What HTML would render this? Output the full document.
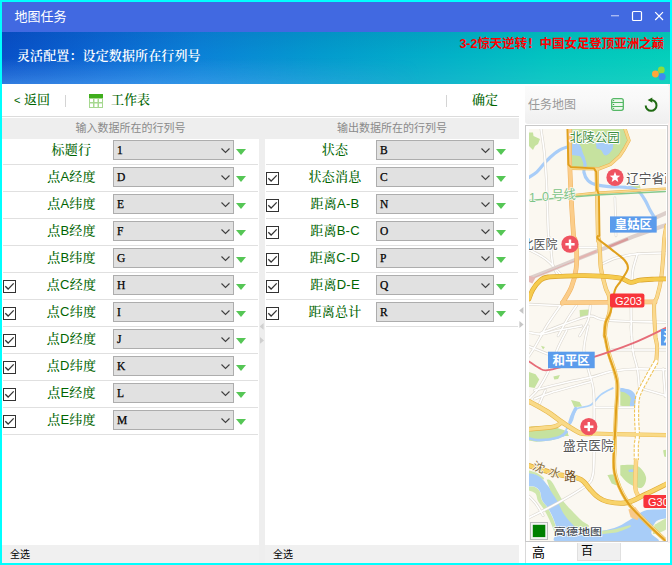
<!DOCTYPE html>
<html lang="zh-CN">
<head>
<meta charset="utf-8">
<title>地图任务</title>
<style>
*{box-sizing:border-box;margin:0;padding:0}
html,body{width:672px;height:565px;overflow:hidden;background:#00ffff}
body{position:relative;font-family:"Liberation Sans","Noto Sans CJK SC",sans-serif;font-size:12px;color:#000}
.abs{position:absolute}
#win{position:absolute;left:2px;top:2px;width:668px;height:561px;background:#fff;overflow:hidden}
#title{position:absolute;left:0;top:0;width:668px;height:30px;background:#4169e1;color:#fff}
#title .t{position:absolute;left:12.5px;top:7px;font-size:13px;line-height:16px;letter-spacing:0}
#banner{position:absolute;left:0;top:30px;width:668px;height:52px;
 background:linear-gradient(180deg,rgba(0,10,80,.07) 0%,rgba(0,0,0,0) 45%,rgba(255,255,255,.07) 100%),linear-gradient(90deg,#0850c8 0%,#0b68d3 15%,#0a82d7 30%,#039bce 48%,#02b0c8 66%,#02c4c0 82%,#04cfbb 100%);color:#fff;overflow:hidden}
#banner .t{font-family:"Liberation Sans","Noto Serif CJK SC",serif;font-weight:600;position:absolute;left:15px;top:15px;font-size:13px;line-height:18px;letter-spacing:0.12px}
#banner .news{position:absolute;right:6px;top:4px;font-size:12.45px;line-height:16px;color:#ff0000;font-weight:bold;white-space:nowrap}
#tool{position:absolute;left:0;top:82px;width:517px;height:33px;background:#fff;border-bottom:1px solid #dcdcdc;color:#006400;font-size:13px;font-family:"Liberation Sans","Noto Serif CJK SC",serif;font-weight:500}
#tool span{position:absolute;line-height:16px;white-space:nowrap}
.vsep{position:absolute;width:1px;height:12px;background:#d4d4d4;top:11px}
.panel{position:absolute;top:116px;background:#fff}
.phead{z-index:2;position:absolute;left:0;top:0;width:100%;height:21px;background:#eeeeee;color:#8a8a8a;font-size:11px;line-height:14px;text-align:center;padding-top:3px}
.row{position:absolute;left:0;width:100%;height:27px}
.row::after{content:"";position:absolute;left:1px;right:1px;bottom:0;height:1px;background:#e0e0e0}
.row .lb{position:absolute;top:4px;line-height:16px;font-size:13px;letter-spacing:0.25px;color:#006400;font-family:"Liberation Sans","Noto Serif CJK SC",serif;font-weight:500;white-space:nowrap;text-align:center}
.cb{position:absolute;top:2px;height:20px;width:121px;background:#e1e1e1;border:1px solid #adadad;font-family:"Liberation Serif","Noto Serif CJK SC",serif;font-size:11.5px;line-height:18px;padding-left:3px;-webkit-text-stroke:0.25px #000}
.cb svg{position:absolute;right:2px;top:7px}
.tri{position:absolute;top:11px;width:0;height:0;border-left:5px solid transparent;border-right:5px solid transparent;border-top:6px solid #55c655}
.chk{position:absolute;top:7px;width:13px;height:13px;border:1px solid #333;background:#fff}
.chk svg{position:absolute;left:0;top:0}
.pfoot{position:absolute;left:0;bottom:0;width:100%;height:18px;background:#f0f0f0;font-size:10px;line-height:12px;padding:4px 0 0 8px}
</style>
</head>
<body>
<div id="win">
 <div id="title"><span class="t">地图任务</span>
  <svg class="abs" style="left:600px;top:0" width="68" height="30" viewBox="0 0 68 30">
   <rect x="9" y="13" width="8" height="1.4" fill="#a9b8f2"/>
   <rect x="30.5" y="9.5" width="9" height="9" rx="1" fill="none" stroke="#fff" stroke-width="1.2"/>
   <path d="M53.2 10.2 L61 18 M61 10.2 L53.2 18" stroke="#fff" stroke-width="1.2" fill="none"/>
  </svg>
 </div>
 <div id="banner">
  <div class="abs" style="left:0;top:26px;width:420px;height:26px;background:linear-gradient(0deg,rgba(90,175,255,.38) 0%,rgba(90,175,255,.22) 35%,rgba(90,175,255,0) 100%);-webkit-mask-image:linear-gradient(90deg,#000 0%,#000 35%,transparent 100%);mask-image:linear-gradient(90deg,#000 0%,#000 35%,transparent 100%)"></div>
  <span class="t">灵活配置：设定数据所在行列号</span>
  <span class="news">3-2惊天逆转！中国女足登顶亚洲之巅</span>
  <svg class="abs" style="left:646px;top:32px" width="20" height="18" viewBox="0 0 20 18">
   <circle cx="13.3" cy="5.9" r="3.4" fill="#8edc3c"/>
   <circle cx="7.4" cy="10" r="3.4" fill="#ffa63a"/>
   <circle cx="14.2" cy="12.8" r="3.5" fill="#3f8af0"/>
  </svg>
 </div>
 <div id="tool">
  <span style="left:12px;top:8px;font-size:11px;font-family:'Liberation Sans',sans-serif">&lt;</span><span style="left:22px;top:8px">返回</span>
  <div class="vsep" style="left:63px"></div>
  <svg class="abs" style="left:87px;top:10px" width="14" height="14" viewBox="0 0 14 14">
   <rect x="0" y="0" width="14" height="14" fill="#a6d890"/>
   <rect x="0" y="0" width="14" height="4" fill="#3fae1c"/>
   <rect x="1" y="5" width="3" height="3" fill="#fff"/><rect x="5.5" y="5" width="3" height="3" fill="#fff"/><rect x="10" y="5" width="3" height="3" fill="#fff"/>
   <rect x="1" y="9.5" width="3" height="3.5" fill="#fff"/><rect x="5.5" y="9.5" width="3" height="3.5" fill="#fff"/><rect x="10" y="9.5" width="3" height="3.5" fill="#fff"/>
  </svg>
  <span style="left:109px;top:8px">工作表</span>
  <div class="vsep" style="left:444px"></div>
  <span style="left:470px;top:8px">确定</span>
 </div>

 <!-- left panel -->
 <div class="panel" id="pl" style="left:0;width:257px;height:445px">
  <div class="phead">输入数据所在的行列号</div>
  <div class="row" style="top:20px"><span class="lb" style="left:29px;width:81px">标题行</span><div class="cb" style="left:111px;width:121px">1<svg width="10" height="6" viewBox="0 0 10 6"><path d="M0.5 0.5 L4.5 4.5 L8.5 0.5" fill="none" stroke="#404040" stroke-width="1.1"/></svg></div><div class="tri" style="left:234px"></div></div>
  <div class="row" style="top:47px"><span class="lb" style="left:29px;width:81px">点A经度</span><div class="cb" style="left:111px;width:121px">D<svg width="10" height="6" viewBox="0 0 10 6"><path d="M0.5 0.5 L4.5 4.5 L8.5 0.5" fill="none" stroke="#404040" stroke-width="1.1"/></svg></div><div class="tri" style="left:234px"></div></div>
  <div class="row" style="top:74px"><span class="lb" style="left:29px;width:81px">点A纬度</span><div class="cb" style="left:111px;width:121px">E<svg width="10" height="6" viewBox="0 0 10 6"><path d="M0.5 0.5 L4.5 4.5 L8.5 0.5" fill="none" stroke="#404040" stroke-width="1.1"/></svg></div><div class="tri" style="left:234px"></div></div>
  <div class="row" style="top:101px"><span class="lb" style="left:29px;width:81px">点B经度</span><div class="cb" style="left:111px;width:121px">F<svg width="10" height="6" viewBox="0 0 10 6"><path d="M0.5 0.5 L4.5 4.5 L8.5 0.5" fill="none" stroke="#404040" stroke-width="1.1"/></svg></div><div class="tri" style="left:234px"></div></div>
  <div class="row" style="top:128px"><span class="lb" style="left:29px;width:81px">点B纬度</span><div class="cb" style="left:111px;width:121px">G<svg width="10" height="6" viewBox="0 0 10 6"><path d="M0.5 0.5 L4.5 4.5 L8.5 0.5" fill="none" stroke="#404040" stroke-width="1.1"/></svg></div><div class="tri" style="left:234px"></div></div>
  <div class="row" style="top:155px"><div class="chk" style="left:1px"><svg width="11" height="11" viewBox="0 0 11 11"><path d="M1.3 5.3 L4.1 8.1 L9.7 2.4" fill="none" stroke="#333" stroke-width="1.35"/></svg></div><span class="lb" style="left:29px;width:81px">点C经度</span><div class="cb" style="left:111px;width:121px">H<svg width="10" height="6" viewBox="0 0 10 6"><path d="M0.5 0.5 L4.5 4.5 L8.5 0.5" fill="none" stroke="#404040" stroke-width="1.1"/></svg></div><div class="tri" style="left:234px"></div></div>
  <div class="row" style="top:182px"><div class="chk" style="left:1px"><svg width="11" height="11" viewBox="0 0 11 11"><path d="M1.3 5.3 L4.1 8.1 L9.7 2.4" fill="none" stroke="#333" stroke-width="1.35"/></svg></div><span class="lb" style="left:29px;width:81px">点C纬度</span><div class="cb" style="left:111px;width:121px">I<svg width="10" height="6" viewBox="0 0 10 6"><path d="M0.5 0.5 L4.5 4.5 L8.5 0.5" fill="none" stroke="#404040" stroke-width="1.1"/></svg></div><div class="tri" style="left:234px"></div></div>
  <div class="row" style="top:209px"><div class="chk" style="left:1px"><svg width="11" height="11" viewBox="0 0 11 11"><path d="M1.3 5.3 L4.1 8.1 L9.7 2.4" fill="none" stroke="#333" stroke-width="1.35"/></svg></div><span class="lb" style="left:29px;width:81px">点D经度</span><div class="cb" style="left:111px;width:121px">J<svg width="10" height="6" viewBox="0 0 10 6"><path d="M0.5 0.5 L4.5 4.5 L8.5 0.5" fill="none" stroke="#404040" stroke-width="1.1"/></svg></div><div class="tri" style="left:234px"></div></div>
  <div class="row" style="top:236px"><div class="chk" style="left:1px"><svg width="11" height="11" viewBox="0 0 11 11"><path d="M1.3 5.3 L4.1 8.1 L9.7 2.4" fill="none" stroke="#333" stroke-width="1.35"/></svg></div><span class="lb" style="left:29px;width:81px">点D纬度</span><div class="cb" style="left:111px;width:121px">K<svg width="10" height="6" viewBox="0 0 10 6"><path d="M0.5 0.5 L4.5 4.5 L8.5 0.5" fill="none" stroke="#404040" stroke-width="1.1"/></svg></div><div class="tri" style="left:234px"></div></div>
  <div class="row" style="top:263px"><div class="chk" style="left:1px"><svg width="11" height="11" viewBox="0 0 11 11"><path d="M1.3 5.3 L4.1 8.1 L9.7 2.4" fill="none" stroke="#333" stroke-width="1.35"/></svg></div><span class="lb" style="left:29px;width:81px">点E经度</span><div class="cb" style="left:111px;width:121px">L<svg width="10" height="6" viewBox="0 0 10 6"><path d="M0.5 0.5 L4.5 4.5 L8.5 0.5" fill="none" stroke="#404040" stroke-width="1.1"/></svg></div><div class="tri" style="left:234px"></div></div>
  <div class="row" style="top:290px"><div class="chk" style="left:1px"><svg width="11" height="11" viewBox="0 0 11 11"><path d="M1.3 5.3 L4.1 8.1 L9.7 2.4" fill="none" stroke="#333" stroke-width="1.35"/></svg></div><span class="lb" style="left:29px;width:81px">点E纬度</span><div class="cb" style="left:111px;width:121px">M<svg width="10" height="6" viewBox="0 0 10 6"><path d="M0.5 0.5 L4.5 4.5 L8.5 0.5" fill="none" stroke="#404040" stroke-width="1.1"/></svg></div><div class="tri" style="left:234px"></div></div>
  <div class="pfoot">全选</div>
 </div>
 <!-- splitter -->
 <div class="abs" style="left:257px;top:116px;width:6px;height:445px;background:#eeeeee">
  <svg class="abs" style="left:0;top:204px" width="6" height="24" viewBox="0 0 6 24"><path d="M0.6 4.4 L4.6 1 V7.8 Z M5 18.4 L1 15 V21.8 Z" fill="#cfcfcf"/></svg>
 </div>
 <svg class="abs" style="left:516px;top:304px" width="7" height="24" viewBox="0 0 7 24"><path d="M1.2 4.5 L5.4 1 V8 Z M5.6 18.5 L1.4 15 V22 Z" fill="#c6c6c6"/></svg>
 <!-- right panel -->
 <div class="panel" id="pr" style="left:263px;width:254px;height:445px">
  <div class="phead">输出数据所在的行列号</div>
  <div class="row" style="top:20px"><span class="lb" style="left:30px;width:80px">状态</span><div class="cb" style="left:111px;width:118px">B<svg width="10" height="6" viewBox="0 0 10 6"><path d="M0.5 0.5 L4.5 4.5 L8.5 0.5" fill="none" stroke="#404040" stroke-width="1.1"/></svg></div><div class="tri" style="left:231px"></div></div>
  <div class="row" style="top:47px"><div class="chk" style="left:1px"><svg width="11" height="11" viewBox="0 0 11 11"><path d="M1.3 5.3 L4.1 8.1 L9.7 2.4" fill="none" stroke="#333" stroke-width="1.35"/></svg></div><span class="lb" style="left:30px;width:80px">状态消息</span><div class="cb" style="left:111px;width:118px">C<svg width="10" height="6" viewBox="0 0 10 6"><path d="M0.5 0.5 L4.5 4.5 L8.5 0.5" fill="none" stroke="#404040" stroke-width="1.1"/></svg></div><div class="tri" style="left:231px"></div></div>
  <div class="row" style="top:74px"><div class="chk" style="left:1px"><svg width="11" height="11" viewBox="0 0 11 11"><path d="M1.3 5.3 L4.1 8.1 L9.7 2.4" fill="none" stroke="#333" stroke-width="1.35"/></svg></div><span class="lb" style="left:30px;width:80px">距离A-B</span><div class="cb" style="left:111px;width:118px">N<svg width="10" height="6" viewBox="0 0 10 6"><path d="M0.5 0.5 L4.5 4.5 L8.5 0.5" fill="none" stroke="#404040" stroke-width="1.1"/></svg></div><div class="tri" style="left:231px"></div></div>
  <div class="row" style="top:101px"><div class="chk" style="left:1px"><svg width="11" height="11" viewBox="0 0 11 11"><path d="M1.3 5.3 L4.1 8.1 L9.7 2.4" fill="none" stroke="#333" stroke-width="1.35"/></svg></div><span class="lb" style="left:30px;width:80px">距离B-C</span><div class="cb" style="left:111px;width:118px">O<svg width="10" height="6" viewBox="0 0 10 6"><path d="M0.5 0.5 L4.5 4.5 L8.5 0.5" fill="none" stroke="#404040" stroke-width="1.1"/></svg></div><div class="tri" style="left:231px"></div></div>
  <div class="row" style="top:128px"><div class="chk" style="left:1px"><svg width="11" height="11" viewBox="0 0 11 11"><path d="M1.3 5.3 L4.1 8.1 L9.7 2.4" fill="none" stroke="#333" stroke-width="1.35"/></svg></div><span class="lb" style="left:30px;width:80px">距离C-D</span><div class="cb" style="left:111px;width:118px">P<svg width="10" height="6" viewBox="0 0 10 6"><path d="M0.5 0.5 L4.5 4.5 L8.5 0.5" fill="none" stroke="#404040" stroke-width="1.1"/></svg></div><div class="tri" style="left:231px"></div></div>
  <div class="row" style="top:155px"><div class="chk" style="left:1px"><svg width="11" height="11" viewBox="0 0 11 11"><path d="M1.3 5.3 L4.1 8.1 L9.7 2.4" fill="none" stroke="#333" stroke-width="1.35"/></svg></div><span class="lb" style="left:30px;width:80px">距离D-E</span><div class="cb" style="left:111px;width:118px">Q<svg width="10" height="6" viewBox="0 0 10 6"><path d="M0.5 0.5 L4.5 4.5 L8.5 0.5" fill="none" stroke="#404040" stroke-width="1.1"/></svg></div><div class="tri" style="left:231px"></div></div>
  <div class="row" style="top:182px"><div class="chk" style="left:1px"><svg width="11" height="11" viewBox="0 0 11 11"><path d="M1.3 5.3 L4.1 8.1 L9.7 2.4" fill="none" stroke="#333" stroke-width="1.35"/></svg></div><span class="lb" style="left:30px;width:80px">距离总计</span><div class="cb" style="left:111px;width:118px">R<svg width="10" height="6" viewBox="0 0 10 6"><path d="M0.5 0.5 L4.5 4.5 L8.5 0.5" fill="none" stroke="#404040" stroke-width="1.1"/></svg></div><div class="tri" style="left:231px"></div></div>
  <div class="pfoot">全选</div>
 </div>

 <!-- right: task map -->
 <div class="abs" style="left:666px;top:82px;width:2px;height:459px;background:#fdf0ef"></div>
 <div class="abs" id="mhead" style="left:523px;top:84px;width:144px;height:38px;background:linear-gradient(180deg,#fbfbfb 0%,#f8f8f8 40%,#efefef 100%);border-radius:0 0 3px 3px">
  <span class="abs" style="left:3px;top:10px;font-size:12px;line-height:18px;color:#999999;white-space:nowrap">任务地图</span>
  <svg class="abs" style="left:86px;top:12px" width="13" height="13" viewBox="0 0 13 13">
   <rect x="0.7" y="0.7" width="11.6" height="11.6" rx="2" fill="#eef8ee" stroke="#56b866" stroke-width="1.3"/>
   <path d="M0.8 4.55 H12.2 M0.8 8.5 H12.2" stroke="#56b866" stroke-width="1.1"/>
   <path d="M2 2.6 H3.2 M2 6.5 H3.2 M2 10.4 H3.2" stroke="#3f9e50" stroke-width="1"/>
  </svg>
  <svg class="abs" style="left:118px;top:11px" width="16" height="16" viewBox="0 0 16 16">
   <path d="M8.1 3 A5.4 5.4 0 1 1 2.7 8.4" fill="none" stroke="#1f6a12" stroke-width="2"/>
   <path d="M9.3 0.4 L9.3 5.8 L4.6 3.1 Z" fill="#1f6a12"/>
  </svg>
 </div>
 <div class="abs" id="mframe" style="left:523px;top:123px;width:143px;height:417px;border:1px solid #c9c9c9;background:#fff">
  <div class="abs" id="map" style="left:3px;top:3px;width:137px;height:412px;background:#fbf8f1;overflow:hidden">
  <!--MAP-->
<svg class="abs" style="left:0;top:0" width="138" height="412" viewBox="0 0 138 412">
<path d="M0.0 3.5 L4.0 3.5 L4.5 7.0 L11.0 10.0 L9.0 15.0 L6.0 17.0 L4.0 21.0 L0.0 17.0Z" fill="#c6e29f"/>
<path d="M41.5 -1.0 L95.9 -1.0 L100.0 11.5 L95.5 19.8 L90.7 27.1 L81.3 35.5 L69.8 39.6 L41.7 39.0Z" fill="#c6e29f"/>
<path d="M100.9 54.4 L110.6 55.3 L111.6 59.6 L102.0 58.7Z" fill="#c6e29f"/>
<path d="M50.6 181.0 L60.2 180.6 L59.6 189.1 L51.0 188.7Z" fill="#c6e29f"/>
<path d="M0.0 243.1 L6.6 245.2 L10.3 250.6 L5.6 259.1 L0.0 258.1Z" fill="#c6e29f"/>
<path d="M24.4 247.4 L30.9 245.9 L29.1 250.1 L25.3 250.6Z" fill="#c6e29f"/>
<path d="M12.0 216.7 L15.9 218.0 L14.1 220.6Z" fill="#c6e29f"/>
<path d="M42.0 270.9 L50.6 273.1 L53.1 277.4 L45.2 278.0Z" fill="#c6e29f"/>
<path d="M91.3 260.2 C93.4 260.9 101.7 261.6 104.1 264.5 C106.6 267.4 108.0 275.3 105.8 277.4 C103.7 279.4 93.7 276.8 91.3 276.7Z" fill="#c6e29f"/>
<path d="M0.0 297.7 L20.6 296.6 L37.7 302.0 L39.9 306.9 L0.0 306.9Z" fill="#c6e29f"/>
<path d="M0.0 303.0 C6.3 303.0 32.9 301.9 37.7 303.0 C42.6 304.1 33.8 307.8 29.1 309.4 C24.5 311.0 14.7 312.3 9.9 312.6 C5.0 313.0 1.6 311.7 0.0 311.6Z" fill="#c6e29f"/>
<path d="M0.0 341.5 C1.2 341.8 4.6 342.3 7.0 343.5 C9.4 344.7 13.4 347.3 14.5 348.5 C15.6 349.7 14.8 350.9 13.5 350.5 C12.2 350.1 9.2 347.1 7.0 346.2 C4.8 345.2 1.2 345.0 0.0 344.8Z" fill="#cfe7ad"/>
<path d="M0.0 357.5 C1.0 357.6 3.9 357.1 5.7 358.0 C7.5 358.9 9.6 360.4 10.8 362.6 C12.0 364.8 11.5 368.3 12.8 371.0 C14.1 373.7 16.9 375.8 18.8 379.0 C20.7 382.2 22.6 386.2 24.2 390.0 C25.8 393.8 27.0 398.3 28.3 402.0 C29.6 405.7 31.9 410.3 32.0 412.0 C32.1 413.7 30.2 413.7 29.0 412.0 C27.8 410.3 26.4 405.5 25.0 402.0 C23.6 398.5 22.2 394.6 20.5 391.0 C18.8 387.4 16.9 383.7 15.0 380.5 C13.1 377.3 10.4 374.7 9.0 372.0 C7.6 369.3 8.0 366.2 6.5 364.5 C5.0 362.8 1.1 362.0 0.0 361.5Z" fill="#cfe7ad"/>
<path d="M91.3 336.2 C94.1 336.3 104.1 334.9 108.4 336.9 C112.7 338.8 116.3 344.4 117.0 348.0 C117.7 351.6 115.6 357.6 112.7 358.7 C109.8 359.8 103.4 356.6 99.9 354.4 C96.3 352.3 92.7 347.3 91.3 345.9Z" fill="#c6e29f"/>
<path d="M78.4 345.9 C79.9 345.9 84.9 344.5 87.0 346.3 C89.1 348.1 92.0 355.2 91.3 356.6 C90.6 357.9 84.1 354.8 82.7 354.4Z" fill="#c6e29f"/>
<path d="M134.1 321.2 L140.6 320.1 L140.6 328.7 L135.2 327.6Z" fill="#c6e29f"/>
<path d="M42.9 15.2 C43.7 15.0 46.5 13.7 48.0 14.1 C49.5 14.5 50.9 16.1 51.9 17.6 C52.8 19.1 52.9 21.2 53.6 23.1 C54.2 25.1 56.0 28.1 55.9 29.1 C55.9 30.2 54.1 29.9 53.1 29.6 C52.2 29.2 51.9 27.6 50.1 27.0 C48.4 26.4 44.1 26.1 42.9 25.9Z" fill="#a8cdf8"/>
<path d="M66.6 13.3 C69.1 13.1 78.7 11.1 81.6 12.0 C84.5 12.9 84.3 16.3 84.0 18.4 C83.7 20.6 81.1 23.6 79.7 24.9 C78.3 26.1 76.7 26.8 75.4 26.1 C74.1 25.5 73.3 22.1 72.0 21.0 C70.7 19.9 68.4 19.9 67.7 19.7Z" fill="#a8cdf8"/>
<path d="M0.0 48.4 C1.3 47.5 5.2 45.4 7.7 43.1 C10.2 40.7 12.7 37.2 15.2 34.5 C17.7 31.8 20.0 29.3 22.7 27.0 C25.4 24.7 28.4 22.1 31.3 20.6 C34.1 19.0 38.4 18.1 39.9 17.6" fill="none" stroke="#a8cdf8" stroke-width="3.2" stroke-linejoin="round" stroke-linecap="round" />
<path d="M54.0 28.7 C54.4 29.9 56.0 33.2 56.1 35.6 C56.3 38.0 54.4 40.4 54.9 43.1 C55.4 45.7 57.0 49.5 59.1 51.6 C61.3 53.8 63.8 54.9 67.7 55.9 C71.6 57.0 77.7 57.5 82.7 57.9 C87.7 58.2 93.4 57.7 97.7 58.3 C102.0 58.9 105.4 59.2 108.4 61.3 C111.5 63.4 113.8 67.5 115.9 70.9 C118.1 74.3 119.6 78.6 121.3 81.6 C123.0 84.7 125.2 87.9 126.0 89.1" fill="none" stroke="#a8cdf8" stroke-width="3.2" stroke-linejoin="round" stroke-linecap="round" />
<path d="M83.8 259.1 C81.8 260.2 75.7 262.7 72.0 265.6 C68.2 268.4 65.4 273.9 61.3 276.3 C57.2 278.7 50.4 277.6 47.4 280.1 C44.3 282.6 44.7 288.0 43.1 291.3 C41.5 294.6 39.1 297.2 37.7 299.8 C36.3 302.5 35.0 305.7 34.5 306.9" fill="none" stroke="#aed3fb" stroke-width="1.8" stroke-linejoin="round" stroke-linecap="round" />
<path d="M91.3 258.7 C93.1 259.1 99.4 259.8 102.0 261.3 C104.6 262.8 106.2 265.1 106.7 267.7 C107.2 270.3 106.2 275.2 105.2 276.7 C104.2 278.2 101.5 278.0 100.9 276.7 C100.3 275.4 102.3 270.9 101.6 268.8 C100.8 266.6 98.4 264.9 96.6 263.9 C94.9 262.8 92.2 262.6 91.3 262.4Z" fill="#a8cdf8"/>
<path d="M37.7 303.0 C36.3 303.9 33.8 307.0 29.1 308.4 C24.5 309.7 14.7 311.0 9.9 311.1 C5.0 311.3 1.6 309.7 0.0 309.4" fill="none" stroke="#a8cdf8" stroke-width="2.6" stroke-linejoin="round" stroke-linecap="round" />
<path d="M46.7 279.5 C46.1 280.7 44.0 284.7 43.1 287.0 C42.1 289.3 41.3 292.4 40.9 293.4" fill="none" stroke="#a8cdf8" stroke-width="3.4" stroke-linejoin="round" stroke-linecap="round" />
<path d="M-2.0 344.0 C-0.5 344.3 4.4 344.6 7.0 345.7 C9.6 346.8 11.7 348.5 13.7 350.4 C15.7 352.3 17.3 354.9 19.1 357.1 C20.9 359.3 22.4 361.5 24.4 363.8 C26.4 366.1 29.5 368.5 31.1 371.0 C32.7 373.5 32.4 376.1 33.8 379.0 C35.1 381.9 36.5 385.5 39.2 388.4 C41.9 391.3 46.1 394.4 49.9 396.4 C53.7 398.4 57.9 399.6 61.9 400.5 C65.9 401.4 69.5 402.0 74.0 401.5 C78.5 401.0 84.0 399.6 89.0 397.5 C94.0 395.4 99.8 391.3 104.1 388.7 C108.4 386.1 110.9 383.2 114.8 381.9 C118.7 380.5 123.3 380.8 127.7 380.6 C132.1 380.4 138.8 379.3 141.0 380.6 C143.2 381.9 143.2 386.4 141.0 388.3 C138.8 390.2 130.8 389.5 127.7 392.1 C124.6 394.7 123.0 400.1 122.3 403.7 C121.6 407.3 138.8 412.3 123.8 414.0 C108.8 415.7 48.4 416.0 32.5 414.0 C16.6 412.0 29.9 405.9 28.5 401.8 C27.1 397.8 26.0 393.5 24.4 389.7 C22.8 385.9 20.9 382.1 19.0 379.0 C17.1 375.9 14.3 373.8 13.0 371.0 C11.7 368.2 12.2 364.7 11.0 362.5 C9.8 360.3 7.9 358.7 5.7 357.8 C3.5 356.9 -0.7 357.5 -2.0 357.4Z" fill="#a8cdf8"/>
<path d="M17.6 350.6 C18.5 351.0 20.2 349.5 22.8 352.8 C25.4 356.1 30.0 366.0 33.2 370.7 C36.4 375.4 39.0 377.6 42.2 381.1 C45.4 384.6 49.6 388.8 52.6 391.5 C55.6 394.2 60.4 395.8 60.0 397.2 C59.6 398.6 52.9 400.4 50.0 400.0 C47.1 399.6 45.4 397.2 42.8 394.6 C40.2 392.0 36.9 388.2 34.5 384.5 C32.1 380.8 30.8 376.5 28.6 372.6 C26.4 368.7 22.5 363.1 21.3 361.2Z" fill="#cde6aa"/>
<path d="M72.0 402.0 C74.5 401.6 82.4 400.8 87.0 399.9 C91.6 398.9 97.5 396.7 99.9 396.4 C102.2 396.1 102.9 397.1 101.1 398.1 C99.4 399.2 93.8 401.7 89.1 402.9 C84.5 404.0 75.9 404.6 73.3 405.0Z" fill="#cfe7ad"/>
<path d="M125.6 395.6 C128.1 394.4 138.1 388.0 140.6 388.3 C143.1 388.6 142.2 394.7 140.6 397.3 C139.0 399.9 133.7 402.4 130.9 403.7 C128.1 405.0 125.0 404.8 123.8 405.0Z" fill="#cfe7ad"/>
<path d="M99.4 340.7 C100.2 340.6 103.3 339.9 104.1 340.3 C105.0 340.6 105.3 342.4 104.6 342.9 C103.8 343.3 100.6 343.0 99.9 343.1Z" fill="#a8cdf8"/>
<path d="M12.0 0.0 C12.5 3.8 14.3 14.3 15.2 22.7 C16.1 31.1 16.6 36.5 17.4 50.6 C18.1 64.6 18.9 97.0 19.5 106.9 C20.1 116.8 20.3 105.1 21.0 109.9 C21.7 114.6 22.4 129.5 23.8 135.6 C25.1 141.6 28.2 144.5 29.1 146.3" fill="none" stroke="#dcd8d0" stroke-width="2.8" stroke-linejoin="round" stroke-linecap="round" />
<path d="M85.9 68.8 L87.0 106.9" fill="none" stroke="#dcd8d0" stroke-width="2.5999999999999996" stroke-linejoin="round" stroke-linecap="round" />
<path d="M0.0 120.6 C2.0 121.6 8.6 124.9 12.0 127.0 C15.4 129.1 17.0 130.0 20.6 133.4 C24.1 136.8 31.3 145.0 33.4 147.4" fill="none" stroke="#dcd8d0" stroke-width="2.8" stroke-linejoin="round" stroke-linecap="round" />
<path d="M49.5 118.4 L67.7 118.4" fill="none" stroke="#dcd8d0" stroke-width="2.8" stroke-linejoin="round" stroke-linecap="round" />
<path d="M72.0 135.6 C74.5 134.5 80.9 130.9 87.0 129.1 C93.1 127.4 99.5 125.7 108.4 124.9 C117.3 124.0 135.2 124.0 140.6 123.8" fill="none" stroke="#dcd8d0" stroke-width="2.8" stroke-linejoin="round" stroke-linecap="round" />
<path d="M108.4 124.9 C107.7 127.4 105.0 135.6 104.1 139.9 C103.2 144.1 103.2 148.8 103.1 150.6" fill="none" stroke="#dcd8d0" stroke-width="2.8" stroke-linejoin="round" stroke-linecap="round" />
<path d="M0.0 175.2 L31.3 176.7" fill="none" stroke="#dcd8d0" stroke-width="2.8" stroke-linejoin="round" stroke-linecap="round" />
<path d="M31.3 176.7 C29.1 179.9 21.6 190.5 18.4 195.6 C15.2 200.6 13.1 205.0 12.0 206.9" fill="none" stroke="#dcd8d0" stroke-width="2.8" stroke-linejoin="round" stroke-linecap="round" />
<path d="M47.4 176.7 C45.7 179.1 40.7 186.2 37.7 191.3 C34.7 196.3 30.6 204.3 29.1 206.9" fill="none" stroke="#dcd8d0" stroke-width="2.8" stroke-linejoin="round" stroke-linecap="round" />
<path d="M12.0 204.1 C16.6 202.3 31.6 196.3 39.9 193.4 C48.1 190.6 54.9 187.4 61.3 187.0 C67.7 186.6 65.2 190.2 78.4 191.3 C91.6 192.4 130.2 193.1 140.6 193.4" fill="none" stroke="#dcd8d0" stroke-width="2.8" stroke-linejoin="round" stroke-linecap="round" />
<path d="M61.3 176.7 C60.9 179.1 60.9 186.2 59.1 191.3 C57.4 196.3 52.0 204.3 50.6 206.9" fill="none" stroke="#dcd8d0" stroke-width="2.8" stroke-linejoin="round" stroke-linecap="round" />
<path d="M102.0 176.7 L102.4 206.9" fill="none" stroke="#dcd8d0" stroke-width="2.8" stroke-linejoin="round" stroke-linecap="round" />
<path d="M0.0 203.4 C2.2 203.7 8.2 205.5 13.1 205.1 C17.9 204.8 22.5 202.6 29.1 201.3 C35.7 199.9 48.8 197.7 52.7 197.0" fill="none" stroke="#dcd8d0" stroke-width="2.8" stroke-linejoin="round" stroke-linecap="round" />
<path d="M13.1 205.1 C11.8 207.4 7.7 214.8 5.6 218.4 C3.4 222.1 0.9 225.6 0.0 227.0" fill="none" stroke="#dcd8d0" stroke-width="2.8" stroke-linejoin="round" stroke-linecap="round" />
<path d="M0.0 217.4 L18.4 224.9" fill="none" stroke="#dcd8d0" stroke-width="2.8" stroke-linejoin="round" stroke-linecap="round" />
<path d="M37.7 201.3 C36.3 204.1 32.0 212.0 29.1 218.4 C26.3 224.9 23.8 233.1 20.6 239.9 C17.4 246.6 13.3 254.1 9.9 259.1 C6.4 264.1 1.6 268.1 0.0 269.9" fill="none" stroke="#dcd8d0" stroke-width="2.8" stroke-linejoin="round" stroke-linecap="round" />
<path d="M59.1 197.0 C58.4 200.9 54.9 213.4 54.9 220.6 C54.9 227.7 57.5 233.1 59.1 239.9 C60.7 246.6 63.5 252.7 64.5 261.3 C65.5 269.9 65.0 286.3 65.1 291.3" fill="none" stroke="#dcd8d0" stroke-width="2.8" stroke-linejoin="round" stroke-linecap="round" />
<path d="M82.7 221.0 L140.6 221.0" fill="none" stroke="#dcd8d0" stroke-width="2.8" stroke-linejoin="round" stroke-linecap="round" />
<path d="M102.0 197.0 C102.3 201.3 103.1 215.6 104.1 222.7 C105.2 229.9 107.3 233.4 108.4 239.9 C109.5 246.3 110.2 257.7 110.6 261.3" fill="none" stroke="#dcd8d0" stroke-width="2.8" stroke-linejoin="round" stroke-linecap="round" />
<path d="M5.6 261.3 C10.6 260.0 26.3 255.9 35.6 253.8 C44.9 251.6 53.4 250.3 61.3 248.4 C69.1 246.5 74.9 243.9 82.7 242.4 C90.6 241.0 98.8 240.1 108.4 239.9 C118.1 239.6 135.2 240.7 140.6 240.9" fill="none" stroke="#dcd8d0" stroke-width="2.8" stroke-linejoin="round" stroke-linecap="round" />
<path d="M5.6 269.9 C8.4 268.8 13.4 266.3 22.7 263.4 C32.0 260.6 54.9 254.5 61.3 252.7" fill="none" stroke="#dcd8d0" stroke-width="2.8" stroke-linejoin="round" stroke-linecap="round" />
<path d="M65.6 278.4 L108.4 278.4" fill="none" stroke="#dcd8d0" stroke-width="2.8" stroke-linejoin="round" stroke-linecap="round" />
<path d="M110.6 259.1 L140.6 267.7" fill="none" stroke="#dcd8d0" stroke-width="2.8" stroke-linejoin="round" stroke-linecap="round" />
<path d="M134.1 239.9 L136.3 267.7" fill="none" stroke="#dcd8d0" stroke-width="2.8" stroke-linejoin="round" stroke-linecap="round" />
<path d="M9.9 276.3 L16.3 261.3" fill="none" stroke="#dcd8d0" stroke-width="2.8" stroke-linejoin="round" stroke-linecap="round" />
<path d="M65.1 322.3 C64.9 326.2 65.2 340.1 63.9 345.9 C62.5 351.6 62.8 351.9 57.0 356.6 C51.2 361.2 38.6 368.4 29.1 373.7 C19.6 379.1 4.9 386.2 0.0 388.7" fill="none" stroke="#dcd8d0" stroke-width="3.0" stroke-linejoin="round" stroke-linecap="round" />
<path d="M0.0 367.3 C1.3 368.7 5.4 372.6 7.7 375.9 C10.1 379.1 13.1 384.8 14.1 386.6" fill="none" stroke="#dcd8d0" stroke-width="2.8" stroke-linejoin="round" stroke-linecap="round" />
<path d="M12.0 0.0 C12.5 3.8 14.3 14.3 15.2 22.7 C16.1 31.1 16.6 36.5 17.4 50.6 C18.1 64.6 18.9 97.0 19.5 106.9 C20.1 116.8 20.3 105.1 21.0 109.9 C21.7 114.6 22.4 129.5 23.8 135.6 C25.1 141.6 28.2 144.5 29.1 146.3" fill="none" stroke="#ffffff" stroke-width="1.6" stroke-linejoin="round" stroke-linecap="round" />
<path d="M85.9 68.8 L87.0 106.9" fill="none" stroke="#ffffff" stroke-width="1.4" stroke-linejoin="round" stroke-linecap="round" />
<path d="M0.0 120.6 C2.0 121.6 8.6 124.9 12.0 127.0 C15.4 129.1 17.0 130.0 20.6 133.4 C24.1 136.8 31.3 145.0 33.4 147.4" fill="none" stroke="#ffffff" stroke-width="1.6" stroke-linejoin="round" stroke-linecap="round" />
<path d="M49.5 118.4 L67.7 118.4" fill="none" stroke="#ffffff" stroke-width="1.6" stroke-linejoin="round" stroke-linecap="round" />
<path d="M72.0 135.6 C74.5 134.5 80.9 130.9 87.0 129.1 C93.1 127.4 99.5 125.7 108.4 124.9 C117.3 124.0 135.2 124.0 140.6 123.8" fill="none" stroke="#ffffff" stroke-width="1.6" stroke-linejoin="round" stroke-linecap="round" />
<path d="M108.4 124.9 C107.7 127.4 105.0 135.6 104.1 139.9 C103.2 144.1 103.2 148.8 103.1 150.6" fill="none" stroke="#ffffff" stroke-width="1.6" stroke-linejoin="round" stroke-linecap="round" />
<path d="M0.0 175.2 L31.3 176.7" fill="none" stroke="#ffffff" stroke-width="1.6" stroke-linejoin="round" stroke-linecap="round" />
<path d="M31.3 176.7 C29.1 179.9 21.6 190.5 18.4 195.6 C15.2 200.6 13.1 205.0 12.0 206.9" fill="none" stroke="#ffffff" stroke-width="1.6" stroke-linejoin="round" stroke-linecap="round" />
<path d="M47.4 176.7 C45.7 179.1 40.7 186.2 37.7 191.3 C34.7 196.3 30.6 204.3 29.1 206.9" fill="none" stroke="#ffffff" stroke-width="1.6" stroke-linejoin="round" stroke-linecap="round" />
<path d="M12.0 204.1 C16.6 202.3 31.6 196.3 39.9 193.4 C48.1 190.6 54.9 187.4 61.3 187.0 C67.7 186.6 65.2 190.2 78.4 191.3 C91.6 192.4 130.2 193.1 140.6 193.4" fill="none" stroke="#ffffff" stroke-width="1.6" stroke-linejoin="round" stroke-linecap="round" />
<path d="M61.3 176.7 C60.9 179.1 60.9 186.2 59.1 191.3 C57.4 196.3 52.0 204.3 50.6 206.9" fill="none" stroke="#ffffff" stroke-width="1.6" stroke-linejoin="round" stroke-linecap="round" />
<path d="M102.0 176.7 L102.4 206.9" fill="none" stroke="#ffffff" stroke-width="1.6" stroke-linejoin="round" stroke-linecap="round" />
<path d="M0.0 203.4 C2.2 203.7 8.2 205.5 13.1 205.1 C17.9 204.8 22.5 202.6 29.1 201.3 C35.7 199.9 48.8 197.7 52.7 197.0" fill="none" stroke="#ffffff" stroke-width="1.6" stroke-linejoin="round" stroke-linecap="round" />
<path d="M13.1 205.1 C11.8 207.4 7.7 214.8 5.6 218.4 C3.4 222.1 0.9 225.6 0.0 227.0" fill="none" stroke="#ffffff" stroke-width="1.6" stroke-linejoin="round" stroke-linecap="round" />
<path d="M0.0 217.4 L18.4 224.9" fill="none" stroke="#ffffff" stroke-width="1.6" stroke-linejoin="round" stroke-linecap="round" />
<path d="M37.7 201.3 C36.3 204.1 32.0 212.0 29.1 218.4 C26.3 224.9 23.8 233.1 20.6 239.9 C17.4 246.6 13.3 254.1 9.9 259.1 C6.4 264.1 1.6 268.1 0.0 269.9" fill="none" stroke="#ffffff" stroke-width="1.6" stroke-linejoin="round" stroke-linecap="round" />
<path d="M59.1 197.0 C58.4 200.9 54.9 213.4 54.9 220.6 C54.9 227.7 57.5 233.1 59.1 239.9 C60.7 246.6 63.5 252.7 64.5 261.3 C65.5 269.9 65.0 286.3 65.1 291.3" fill="none" stroke="#ffffff" stroke-width="1.6" stroke-linejoin="round" stroke-linecap="round" />
<path d="M82.7 221.0 L140.6 221.0" fill="none" stroke="#ffffff" stroke-width="1.6" stroke-linejoin="round" stroke-linecap="round" />
<path d="M102.0 197.0 C102.3 201.3 103.1 215.6 104.1 222.7 C105.2 229.9 107.3 233.4 108.4 239.9 C109.5 246.3 110.2 257.7 110.6 261.3" fill="none" stroke="#ffffff" stroke-width="1.6" stroke-linejoin="round" stroke-linecap="round" />
<path d="M5.6 261.3 C10.6 260.0 26.3 255.9 35.6 253.8 C44.9 251.6 53.4 250.3 61.3 248.4 C69.1 246.5 74.9 243.9 82.7 242.4 C90.6 241.0 98.8 240.1 108.4 239.9 C118.1 239.6 135.2 240.7 140.6 240.9" fill="none" stroke="#ffffff" stroke-width="1.6" stroke-linejoin="round" stroke-linecap="round" />
<path d="M5.6 269.9 C8.4 268.8 13.4 266.3 22.7 263.4 C32.0 260.6 54.9 254.5 61.3 252.7" fill="none" stroke="#ffffff" stroke-width="1.6" stroke-linejoin="round" stroke-linecap="round" />
<path d="M65.6 278.4 L108.4 278.4" fill="none" stroke="#ffffff" stroke-width="1.6" stroke-linejoin="round" stroke-linecap="round" />
<path d="M110.6 259.1 L140.6 267.7" fill="none" stroke="#ffffff" stroke-width="1.6" stroke-linejoin="round" stroke-linecap="round" />
<path d="M134.1 239.9 L136.3 267.7" fill="none" stroke="#ffffff" stroke-width="1.6" stroke-linejoin="round" stroke-linecap="round" />
<path d="M9.9 276.3 L16.3 261.3" fill="none" stroke="#ffffff" stroke-width="1.6" stroke-linejoin="round" stroke-linecap="round" />
<path d="M65.1 322.3 C64.9 326.2 65.2 340.1 63.9 345.9 C62.5 351.6 62.8 351.9 57.0 356.6 C51.2 361.2 38.6 368.4 29.1 373.7 C19.6 379.1 4.9 386.2 0.0 388.7" fill="none" stroke="#ffffff" stroke-width="1.8" stroke-linejoin="round" stroke-linecap="round" />
<path d="M0.0 367.3 C1.3 368.7 5.4 372.6 7.7 375.9 C10.1 379.1 13.1 384.8 14.1 386.6" fill="none" stroke="#ffffff" stroke-width="1.6" stroke-linejoin="round" stroke-linecap="round" />
<path d="M125.6 89.1 L140.6 82.3" fill="none" stroke="#dccfcb" stroke-width="4" stroke-linejoin="round" stroke-linecap="round" />
<path d="M0.0 149.5 L16.3 143.1 L50.6 129.1 L82.7 116.3 L104.1 107.7 L134.1 97.0 L140.6 94.4" fill="none" stroke="#dccfcb" stroke-width="4" stroke-linejoin="round" stroke-linecap="round" />
<path d="M46.9 130.6 L67.7 122.2" fill="none" stroke="#e3b4b0" stroke-width="2.4" stroke-linejoin="round" stroke-linecap="butt" />
<path d="M80.2 117.6 L99.0 109.9" fill="none" stroke="#d99a9a" stroke-width="2.6" stroke-linejoin="round" stroke-linecap="butt" />
<path d="M0.0 150.6 L48.4 130.9" fill="none" stroke="#e0b0b0" stroke-width="1" stroke-linejoin="round" stroke-linecap="round" />
<path d="M0.0 146.7 L6.6 148.4 L3.4 154.4 L0.0 153.1Z" fill="#e6b8b4"/>
<path d="M40.5 0.0 C40.6 6.6 40.2 22.0 40.9 39.9 C41.6 57.7 43.7 95.3 44.6 106.9 C45.4 118.6 45.4 107.2 45.9 109.9 C46.4 112.5 47.4 117.7 47.6 122.7 C47.8 127.7 48.0 134.0 47.1 139.9 C46.3 145.7 44.7 152.4 42.4 158.1 C40.1 163.8 34.9 171.5 33.4 174.1" fill="none" stroke="#f0b25f" stroke-width="4.7" stroke-linejoin="round" stroke-linecap="round" />
<path d="M33.4 173.7 L80.6 173.3 L126.2 172.9" fill="none" stroke="#f0b25f" stroke-width="4.6" stroke-linejoin="round" stroke-linecap="round" />
<path d="M95.7 -1.0 L100.0 11.5 L95.5 19.8 L90.7 27.1 L81.3 35.5 L69.8 39.8 L42.0 39.3" fill="none" stroke="#e8b450" stroke-width="3.4" stroke-linejoin="round" stroke-linecap="round" />
<path d="M46.7 66.0 L67.7 63.9 L136.3 59.8" fill="none" stroke="#e8b450" stroke-width="2.6" stroke-linejoin="round" stroke-linecap="round" />
<path d="M67.7 40.9 C67.9 51.9 68.6 95.4 69.0 106.9 C69.4 118.4 69.5 107.2 69.9 109.9 C70.2 112.5 70.6 117.7 70.9 122.7 C71.3 127.7 71.0 133.8 72.0 139.9 C73.0 145.9 75.4 154.5 76.7 159.1 C78.1 163.8 79.5 163.8 80.1 167.7 C80.8 171.6 81.1 178.1 80.6 182.7 C80.0 187.4 77.5 191.5 76.7 195.6 C75.9 199.6 76.0 205.0 75.9 206.9" fill="none" stroke="#e8b450" stroke-width="4.2" stroke-linejoin="round" stroke-linecap="round" />
<path d="M75.9 206.9 C76.0 207.4 76.0 206.9 76.7 209.9 C77.4 212.8 78.2 217.7 80.1 224.9 C82.0 232.0 86.9 243.1 88.1 252.7 C89.2 262.4 87.4 273.7 87.0 282.7 C86.6 291.7 86.1 301.4 85.9 306.9 C85.7 312.4 85.9 309.7 85.9 315.9 C85.9 322.0 84.0 334.4 85.9 343.7 C87.9 353.0 92.5 363.4 97.7 371.6 C102.9 379.8 110.6 386.4 117.0 393.0 C123.4 399.6 133.1 408.2 136.3 411.2" fill="none" stroke="#efc050" stroke-width="4.0" stroke-linejoin="round" stroke-linecap="round" />
<path d="M137.3 97.0 C137.0 99.1 135.7 104.5 135.2 109.9 C134.7 115.2 134.7 122.4 134.1 129.1 C133.6 135.9 133.0 144.1 132.0 150.6 C131.0 157.0 129.3 163.4 128.1 167.7 C127.0 172.1 125.4 170.2 125.1 176.7 C124.8 183.2 126.1 201.4 126.4 206.9 C126.7 212.4 126.6 207.9 126.8 209.9 C127.1 211.8 128.1 214.7 128.1 218.4 C128.2 222.2 127.4 230.0 127.3 232.4" fill="none" stroke="#e8b450" stroke-width="4.0" stroke-linejoin="round" stroke-linecap="round" />
<path d="M127.3 232.4 C125.6 235.4 120.1 244.7 117.0 250.6 C113.9 256.5 110.4 261.6 108.8 267.7 C107.3 273.8 107.6 280.5 107.6 287.0 C107.5 293.5 108.5 302.1 108.4 306.9 C108.4 311.7 107.5 311.9 107.3 315.9 C107.2 319.8 107.3 328.4 107.3 330.9" fill="none" stroke="#efc458" stroke-width="5.2" stroke-linejoin="round" stroke-linecap="butt" stroke-dasharray="3 1.4"/>
<path d="M107.1 330.9 C107.0 335.5 105.9 352.6 106.3 358.7 C106.7 364.8 109.0 365.9 109.5 367.3" fill="none" stroke="#f0c060" stroke-width="4.4" stroke-linejoin="round" stroke-linecap="round" />
<path d="M50.6 304.1 C56.6 304.3 72.0 304.9 87.0 305.2 C102.0 305.5 131.6 305.9 140.6 306.1" fill="none" stroke="#ecbc55" stroke-width="4.2" stroke-linejoin="round" stroke-linecap="round" />
<path d="M40.5 0.0 C40.6 6.6 40.2 22.0 40.9 39.9 C41.6 57.7 43.7 95.3 44.6 106.9 C45.4 118.6 45.4 107.2 45.9 109.9 C46.4 112.5 47.4 117.7 47.6 122.7 C47.8 127.7 48.0 134.0 47.1 139.9 C46.3 145.7 44.7 152.4 42.4 158.1 C40.1 163.8 34.9 171.5 33.4 174.1" fill="none" stroke="#fbcd8a" stroke-width="3.7" stroke-linejoin="round" stroke-linecap="round" />
<path d="M33.4 173.7 L80.6 173.3 L126.2 172.9" fill="none" stroke="#fbcd8a" stroke-width="3.6" stroke-linejoin="round" stroke-linecap="round" />
<path d="M95.7 -1.0 L100.0 11.5 L95.5 19.8 L90.7 27.1 L81.3 35.5 L69.8 39.8 L42.0 39.3" fill="none" stroke="#f9d88c" stroke-width="2.4" stroke-linejoin="round" stroke-linecap="round" />
<path d="M46.7 66.0 L67.7 63.9 L136.3 59.8" fill="none" stroke="#f9d88c" stroke-width="1.6" stroke-linejoin="round" stroke-linecap="round" />
<path d="M67.7 40.9 C67.9 51.9 68.6 95.4 69.0 106.9 C69.4 118.4 69.5 107.2 69.9 109.9 C70.2 112.5 70.6 117.7 70.9 122.7 C71.3 127.7 71.0 133.8 72.0 139.9 C73.0 145.9 75.4 154.5 76.7 159.1 C78.1 163.8 79.5 163.8 80.1 167.7 C80.8 171.6 81.1 178.1 80.6 182.7 C80.0 187.4 77.5 191.5 76.7 195.6 C75.9 199.6 76.0 205.0 75.9 206.9" fill="none" stroke="#fad98e" stroke-width="3.2" stroke-linejoin="round" stroke-linecap="round" />
<path d="M75.9 206.9 C76.0 207.4 76.0 206.9 76.7 209.9 C77.4 212.8 78.2 217.7 80.1 224.9 C82.0 232.0 86.9 243.1 88.1 252.7 C89.2 262.4 87.4 273.7 87.0 282.7 C86.6 291.7 86.1 301.4 85.9 306.9 C85.7 312.4 85.9 309.7 85.9 315.9 C85.9 322.0 84.0 334.4 85.9 343.7 C87.9 353.0 92.5 363.4 97.7 371.6 C102.9 379.8 110.6 386.4 117.0 393.0 C123.4 399.6 133.1 408.2 136.3 411.2" fill="none" stroke="#fbe6b0" stroke-width="3.0" stroke-linejoin="round" stroke-linecap="round" />
<path d="M137.3 97.0 C137.0 99.1 135.7 104.5 135.2 109.9 C134.7 115.2 134.7 122.4 134.1 129.1 C133.6 135.9 133.0 144.1 132.0 150.6 C131.0 157.0 129.3 163.4 128.1 167.7 C127.0 172.1 125.4 170.2 125.1 176.7 C124.8 183.2 126.1 201.4 126.4 206.9 C126.7 212.4 126.6 207.9 126.8 209.9 C127.1 211.8 128.1 214.7 128.1 218.4 C128.2 222.2 127.4 230.0 127.3 232.4" fill="none" stroke="#fad98e" stroke-width="3.0" stroke-linejoin="round" stroke-linecap="round" />
<path d="M127.3 232.4 C125.6 235.4 120.1 244.7 117.0 250.6 C113.9 256.5 110.4 261.6 108.8 267.7 C107.3 273.8 107.6 280.5 107.6 287.0 C107.5 293.5 108.5 302.1 108.4 306.9 C108.4 311.7 107.5 311.9 107.3 315.9 C107.2 319.8 107.3 328.4 107.3 330.9" fill="none" stroke="#ffffff" stroke-width="3.0" stroke-linejoin="round" stroke-linecap="round" />
<path d="M107.1 330.9 C107.0 335.5 105.9 352.6 106.3 358.7 C106.7 364.8 109.0 365.9 109.5 367.3" fill="none" stroke="#fbd88a" stroke-width="3.4" stroke-linejoin="round" stroke-linecap="round" />
<path d="M50.6 304.1 C56.6 304.3 72.0 304.9 87.0 305.2 C102.0 305.5 131.6 305.9 140.6 306.1" fill="none" stroke="#f9da86" stroke-width="3.2" stroke-linejoin="round" stroke-linecap="round" />
<path d="M0.0 169.9 C0.6 168.3 2.1 163.4 3.9 160.4 C5.6 157.5 7.7 154.4 10.3 152.3 C12.9 150.2 12.6 148.9 19.3 148.0 C26.0 147.1 41.8 146.9 50.6 146.7 C59.4 146.6 65.2 146.7 72.0 147.1 C78.8 147.5 86.4 148.0 91.3 149.1 C96.2 150.1 98.4 153.0 101.6 153.4 C104.8 153.7 106.6 151.7 110.6 151.2 C114.6 150.7 120.6 150.4 125.6 150.1 C130.6 149.9 138.1 150.0 140.6 149.9" fill="none" stroke="#d9a22a" stroke-width="4.8" stroke-linejoin="round" stroke-linecap="round" />
<path d="M0.0 272.4 C3.1 274.1 12.9 279.2 18.4 282.7 C24.0 286.2 28.1 289.9 33.4 293.4 C38.8 296.9 45.9 301.8 50.6 303.7 C55.2 305.6 59.5 304.6 61.3 304.8" fill="none" stroke="#e6b64a" stroke-width="5.0" stroke-linejoin="round" stroke-linecap="round" />
<path d="M0.0 300.3 C4.1 299.8 19.5 298.8 24.9 297.7 C30.2 296.6 31.1 294.1 32.4 293.4" fill="none" stroke="#e6b64a" stroke-width="4.6" stroke-linejoin="round" stroke-linecap="round" />
<path d="M-1.0 336.2 C0.7 336.8 4.0 338.1 9.0 339.6 C14.0 341.1 22.4 343.8 29.0 345.4 C35.6 347.0 44.1 347.8 48.5 349.1 C52.9 350.4 53.2 351.3 55.2 353.1 C57.2 354.9 58.4 357.4 60.6 359.8 C62.8 362.2 65.6 365.7 68.6 367.8 C71.6 369.9 73.6 371.6 78.4 372.6 C83.2 373.6 91.3 374.9 97.7 373.7 C104.1 372.4 109.8 368.5 117.0 365.1 C124.2 361.7 136.7 355.3 140.6 353.4" fill="none" stroke="#dfa934" stroke-width="5.0" stroke-linejoin="round" stroke-linecap="round" />
<path d="M0.0 169.9 C0.6 168.3 2.1 163.4 3.9 160.4 C5.6 157.5 7.7 154.4 10.3 152.3 C12.9 150.2 12.6 148.9 19.3 148.0 C26.0 147.1 41.8 146.9 50.6 146.7 C59.4 146.6 65.2 146.7 72.0 147.1 C78.8 147.5 86.4 148.0 91.3 149.1 C96.2 150.1 98.4 153.0 101.6 153.4 C104.8 153.7 106.6 151.7 110.6 151.2 C114.6 150.7 120.6 150.4 125.6 150.1 C130.6 149.9 138.1 150.0 140.6 149.9" fill="none" stroke="#f6cb4e" stroke-width="3.6" stroke-linejoin="round" stroke-linecap="round" />
<path d="M0.0 272.4 C3.1 274.1 12.9 279.2 18.4 282.7 C24.0 286.2 28.1 289.9 33.4 293.4 C38.8 296.9 45.9 301.8 50.6 303.7 C55.2 305.6 59.5 304.6 61.3 304.8" fill="none" stroke="#f9da88" stroke-width="3.8" stroke-linejoin="round" stroke-linecap="round" />
<path d="M0.0 300.3 C4.1 299.8 19.5 298.8 24.9 297.7 C30.2 296.6 31.1 294.1 32.4 293.4" fill="none" stroke="#f9da88" stroke-width="3.4" stroke-linejoin="round" stroke-linecap="round" />
<path d="M-1.0 336.2 C0.7 336.8 4.0 338.1 9.0 339.6 C14.0 341.1 22.4 343.8 29.0 345.4 C35.6 347.0 44.1 347.8 48.5 349.1 C52.9 350.4 53.2 351.3 55.2 353.1 C57.2 354.9 58.4 357.4 60.6 359.8 C62.8 362.2 65.6 365.7 68.6 367.8 C71.6 369.9 73.6 371.6 78.4 372.6 C83.2 373.6 91.3 374.9 97.7 373.7 C104.1 372.4 109.8 368.5 117.0 365.1 C124.2 361.7 136.7 355.3 140.6 353.4" fill="none" stroke="#f8d36a" stroke-width="3.8" stroke-linejoin="round" stroke-linecap="round" />
<path d="M99.4 380.6 L106.3 378.0 L111.6 384.9 L108.4 391.3 L101.6 388.3Z" fill="#f8c98a"/>
<path d="M38.4 0.0 L39.4 35.6 L42.0 38.1 L65.1 39.4 L67.3 43.1 L67.7 60.2 L69.9 65.6 L70.5 106.9" fill="none" stroke="#e0a01c" stroke-width="1.9" stroke-linejoin="round" stroke-linecap="round" />
<path d="M69.0 107.1 C69.1 107.6 67.1 108.0 69.4 110.3 C71.7 112.5 78.4 117.1 82.7 120.6 C87.1 124.1 92.9 128.1 95.6 131.3 C98.2 134.5 99.5 136.3 98.8 139.9 C98.1 143.4 93.4 149.1 91.3 152.7 C89.1 156.3 87.5 156.3 85.9 161.3 C84.3 166.3 83.2 177.4 81.6 182.7 C80.1 188.1 77.7 189.4 76.7 193.4 C75.7 197.5 75.6 204.6 75.4 206.9 C75.3 209.2 75.2 204.1 75.9 207.1 C76.5 210.1 77.5 217.2 79.5 224.9 C81.5 232.5 86.8 243.1 88.1 252.7 C89.3 262.4 87.4 273.7 87.0 282.7 C86.6 291.7 86.2 301.9 85.9 306.9 C85.7 312.0 85.6 306.9 85.5 313.1 C85.4 319.2 83.5 334.0 85.5 343.7 C87.5 353.5 92.1 363.4 97.3 371.6 C102.5 379.8 110.1 386.4 116.6 393.0 C123.0 399.6 132.6 408.2 135.8 411.2" fill="none" stroke="#e0a01c" stroke-width="2.1" stroke-linejoin="round" stroke-linecap="round" />
<path d="M0.0 71.6 L46.3 67.7 L67.7 66.0 L136.3 62.4" fill="none" stroke="#86c98e" stroke-width="1.5" stroke-linejoin="round" stroke-linecap="round" />
<path d="M0.0 232.4 C1.6 233.4 6.4 237.4 9.9 238.8 C13.3 240.2 12.0 242.5 20.6 240.9 C29.1 239.3 47.4 233.6 61.3 229.1 C75.2 224.7 91.6 219.1 104.1 214.1 C116.6 209.1 130.2 202.0 136.3 199.1 C142.3 196.3 139.8 197.4 140.6 197.0" fill="none" stroke="#e66c78" stroke-width="1.8" stroke-linejoin="round" stroke-linecap="round" />
<text x="40.8" y="13.2" font-size="12.5" font-family="Liberation Sans, Noto Sans CJK SC, sans-serif" fill="#3f8f3f" stroke="#ffffff" stroke-width="2" paint-order="stroke" stroke-linejoin="round" >北陵公园</text>
<circle cx="86" cy="48.4" r="8.6" fill="#ef5360"/>
<path d="M86.0 42.8 L87.4 46.5 L91.3 46.7 L88.3 49.1 L89.3 52.9 L86.0 50.8 L82.7 52.9 L83.7 49.1 L80.7 46.7 L84.6 46.5Z" fill="#fff"/>
<text x="97.2" y="53.6" font-size="12.7" font-family="Liberation Sans, Noto Sans CJK SC, sans-serif" fill="#555555" stroke="#ffffff" stroke-width="2" paint-order="stroke" stroke-linejoin="round" >辽宁省政府</text>
<text x="0" y="72.8" font-size="12.3" font-family="Liberation Sans, Noto Sans CJK SC, sans-serif" fill="#7cc488" stroke="#fbf8f1" stroke-width="1.5" paint-order="stroke" stroke-linejoin="round" >1</text>
<text x="13" y="71.89" font-size="12.3" font-family="Liberation Sans, Noto Sans CJK SC, sans-serif" fill="#7cc488" stroke="#fbf8f1" stroke-width="1.5" paint-order="stroke" stroke-linejoin="round" >0</text>
<text x="22.5" y="71.225" font-size="12.3" font-family="Liberation Sans, Noto Sans CJK SC, sans-serif" fill="#7cc488" stroke="#fbf8f1" stroke-width="1.5" paint-order="stroke" stroke-linejoin="round" >号</text>
<text x="34.5" y="70.38499999999999" font-size="12.3" font-family="Liberation Sans, Noto Sans CJK SC, sans-serif" fill="#7cc488" stroke="#fbf8f1" stroke-width="1.5" paint-order="stroke" stroke-linejoin="round" >线</text>
<rect x="81" y="87.4" width="46.7" height="16.2" fill="#5b9cec"/>
<text x="85.8" y="100" font-size="12.4" font-weight="bold" font-family="Liberation Sans, Noto Sans CJK SC, sans-serif" fill="#fff">皇姑区</text>
<circle cx="41" cy="115.2" r="8.6" fill="#ef5360"/>
<path d="M36.4 115.2 H45.6 M41 110.60000000000001 V119.8" stroke="#fff" stroke-width="2.4"/>
<text x="-7.5" y="119.5" font-size="12" font-family="Liberation Sans, Noto Sans CJK SC, sans-serif" fill="#555555" stroke="#ffffff" stroke-width="2" paint-order="stroke" stroke-linejoin="round" >北医院</text>
<rect x="81" y="164.5" width="34.4" height="14" rx="2" fill="#f8343a"/>
<text x="86" y="175.6" font-size="11" font-family="Liberation Sans, Noto Sans CJK SC, sans-serif" fill="#fff">G203</text>
<rect x="19" y="222.7" width="46.7" height="16.5" fill="#5b9cec"/>
<text x="23.6" y="235.5" font-size="12.4" font-weight="bold" font-family="Liberation Sans, Noto Sans CJK SC, sans-serif" fill="#fff">和平区</text>
<rect x="132" y="200" width="10" height="16.5" fill="#5b9cec"/>
<text x="134" y="212.8" font-size="12.4" font-weight="bold" font-family="Liberation Sans, Noto Sans CJK SC, sans-serif" fill="#fff">沈</text>
<circle cx="59.8" cy="297.7" r="8.6" fill="#ef5360"/>
<path d="M55.199999999999996 297.7 H64.39999999999999 M59.8 293.09999999999997 V302.3" stroke="#fff" stroke-width="2.4"/>
<text x="34" y="320.6" font-size="12.7" font-family="Liberation Sans, Noto Sans CJK SC, sans-serif" fill="#555555" stroke="#ffffff" stroke-width="2" paint-order="stroke" stroke-linejoin="round" >盛京医院</text>
<text x="4" y="342.5" font-size="12" font-family="Liberation Sans, Noto Sans CJK SC, sans-serif" fill="#8a7040" stroke="#fbf8f1" stroke-width="1.5" paint-order="stroke" stroke-linejoin="round" transform="rotate(20 10 337.5)">沈</text>
<text x="19.8" y="348" font-size="12" font-family="Liberation Sans, Noto Sans CJK SC, sans-serif" fill="#8a7040" stroke="#fbf8f1" stroke-width="1.5" paint-order="stroke" stroke-linejoin="round" transform="rotate(20 25.8 343)">水</text>
<text x="35.2" y="351.6" font-size="12" font-family="Liberation Sans, Noto Sans CJK SC, sans-serif" fill="#6b4a16" stroke="#fbf8f1" stroke-width="1.5" paint-order="stroke" stroke-linejoin="round" transform="rotate(0 41.2 346.6)">路</text>
<rect x="114.4" y="366" width="30" height="13" rx="2" fill="#f8343a"/>
<text x="119" y="376.8" font-size="11" font-family="Liberation Sans, Noto Sans CJK SC, sans-serif" fill="#fff">G304</text>
<rect x="1.5" y="393.5" width="17" height="17" fill="#f4f4f4" stroke="#bdbdbd" stroke-width="1"/>
<rect x="3.8" y="395.8" width="12.5" height="12.3" fill="#008000"/>
<text x="0" y="0" font-size="9.6" font-family="Liberation Sans, Noto Sans CJK SC, sans-serif" fill="#434a54" font-weight="500" stroke="#ffffff" stroke-width="1.4" paint-order="stroke" stroke-linejoin="round" transform="translate(24.8 405.8) scale(1.26 1)">高德地图</text>
</svg>
<!--/MAP-->
  </div>
 </div>
 <div class="abs" style="left:523px;top:540px;width:52px;height:21px;background:#fff;border-left:1px solid #d9d9d9;font-size:13px;line-height:18px;padding:2px 0 0 6px">高</div>
 <div class="abs" style="left:575px;top:541px;width:44px;height:18px;background:#f0f0f0;border:1px solid #e0e0e0;border-top:none;font-size:12px;line-height:16px;padding:0 0 0 3px">百</div>
</div>
</body>
</html>
